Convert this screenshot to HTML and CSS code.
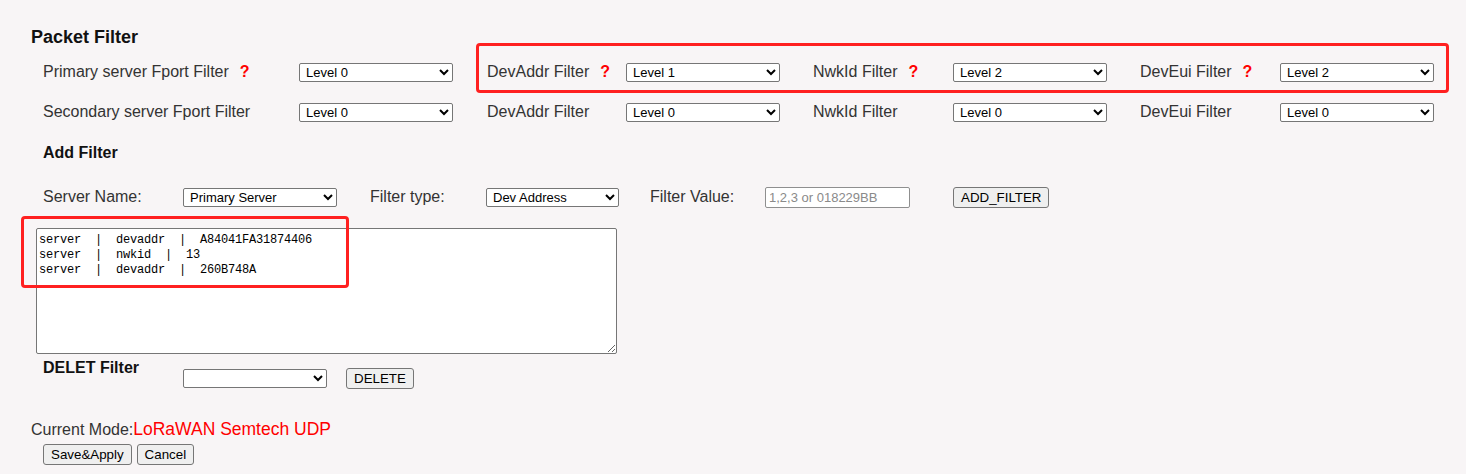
FILE: index.html
```html
<!DOCTYPE html>
<html lang="en">
<head>
    <meta charset="UTF-8">
    <meta name="viewport" content="width=device-width, initial-scale=1.0">
    <title>Packet Filter</title>
    <link rel="stylesheet" href="styles.css">
</head>
<body>
    <div class="page">
        <h2 class="title">Packet Filter</h2>

        <div class="filter-grid">
            <span class="lbl">Primary server Fport Filter<b class="help">?</b></span>
            <select class="lvl"><option>Level 0</option></select>
            <span class="lbl">DevAddr Filter<b class="help">?</b></span>
            <select class="lvl"><option>Level 1</option></select>
            <span class="lbl">NwkId Filter<b class="help">?</b></span>
            <select class="lvl"><option>Level 2</option></select>
            <span class="lbl">DevEui Filter<b class="help">?</b></span>
            <select class="lvl"><option>Level 2</option></select>

            <span class="lbl">Secondary server Fport Filter</span>
            <select class="lvl"><option>Level 0</option></select>
            <span class="lbl">DevAddr Filter</span>
            <select class="lvl"><option>Level 0</option></select>
            <span class="lbl">NwkId Filter</span>
            <select class="lvl"><option>Level 0</option></select>
            <span class="lbl">DevEui Filter</span>
            <select class="lvl"><option>Level 0</option></select>
        </div>

        <h3 class="sub">Add Filter</h3>
        <div class="add-row">
            <span class="lbl w-server">Server Name:</span>
            <select class="sel-server"><option>Primary Server</option></select>
            <span class="lbl w-type">Filter type:</span>
            <select class="sel-type"><option>Dev Address</option></select>
            <span class="lbl w-value">Filter Value:</span>
            <input type="text" class="val" placeholder="1,2,3 or 018229BB">
            <button type="button" class="btn btn-add">ADD_FILTER</button>
        </div>

        <textarea class="list">server  |  devaddr  |  A84041FA31874406
server  |  nwkid  |  13
server  |  devaddr  |  260B748A</textarea>

        <div class="del-row">
            <h3 class="sub del-title">DELET Filter</h3>
            <select class="sel-del"><option></option></select>
            <button type="button" class="btn">DELETE</button>
        </div>

        <p class="mode">Current Mode:<span class="mode-name">LoRaWAN Semtech UDP</span></p>
        <div class="actions">
            <button type="button" class="btn">Save&amp;Apply</button>
            <button type="button" class="btn">Cancel</button>
        </div>

        <div class="mark mark-top"></div>
        <div class="mark mark-list"></div>
    </div>
</body>
</html>
```

FILE: styles.css
```css
body {
    margin: 0;
    padding: 0;
    background: #f8f5f6;
    font-family: "Liberation Sans", Arial, sans-serif;
    color: #333;
}
.page {
    position: relative;
    padding: 26px 0 0 31px;
    height: 448px;
}
.title {
    margin: 0;
    font-size: 18px;
    line-height: 22px;
    color: #111;
}
.filter-grid {
    display: grid;
    grid-template-columns: 256px 188px 139px 187px 140px 187px 140px 154px;
    grid-auto-rows: 40px;
    align-items: center;
    margin: 4px 0 0 12px;
}
.lbl {
    font-size: 16px;
    white-space: nowrap;
}
.help {
    color: #f00;
    margin-left: 11px;
    font-size: 16px;
}
select, input, button, textarea {
    box-sizing: border-box;
}
select {
    font-family: "Liberation Sans", Arial, sans-serif;
    font-size: 13px;
    color: #000;
    background: #fff;
    border: 1px solid #767676;
    border-radius: 2px;
    height: 19px;
    padding: 0 0 0 2px;
}
.lvl {
    width: 154px;
}
.sub {
    margin: 0;
    font-size: 16px;
    line-height: 20px;
    color: #111;
}
.filter-grid + .sub {
    margin: 11px 0 0 12px;
}
.add-row {
    display: flex;
    align-items: center;
    height: 20px;
    margin: 24px 0 0 12px;
}
.w-server { width: 140px; }
.w-type { width: 116px; }
.w-value { width: 115px; }
.sel-server {
    width: 154px;
    margin-right: 33px;
}
.sel-type {
    width: 133px;
    margin-right: 31px;
}
.val {
    width: 145px;
    height: 21px;
    margin-right: 43px;
    border: 1px solid #8f8f8f;
    border-radius: 2px;
    background: #fff;
    padding: 0 3px;
    font-family: "Liberation Sans", Arial, sans-serif;
    font-size: 13px;
}
.val::placeholder {
    color: #8a8a8a;
}
.btn {
    font-family: "Liberation Sans", Arial, sans-serif;
    font-size: 13.33px;
    color: #000;
    background: #efefef;
    border: 1px solid #767676;
    border-radius: 3px;
    padding: 1px 7px;
    height: 21px;
    line-height: 17px;
}
.list {
    display: block;
    width: 581px;
    height: 126px;
    margin: 21px 0 0 5px;
    padding: 4px 2px;
    border: 1px solid #767676;
    border-radius: 2px;
    background: #fff;
    color: #000;
    font-family: "Liberation Mono", "Courier New", monospace;
    font-size: 12px;
    letter-spacing: -0.2px;
    line-height: 15px;
}
.del-row {
    display: flex;
    align-items: flex-start;
    margin: 4px 0 0 12px;
}
.del-title {
    width: 140px;
}
.sel-del {
    width: 144px;
    margin: 11px 19px 0 0;
}
.del-row .btn {
    margin-top: 10px;
}
.mode {
    margin: 30px 0 0;
    font-size: 16px;
    line-height: 20px;
}
.mode-name {
    color: #f00;
    font-size: 17.5px;
}
.actions {
    display: flex;
    gap: 5px;
    margin: 4px 0 0 12px;
}
.mark {
    position: absolute;
    border: 3px solid #ff2020;
    border-radius: 4px;
    box-sizing: border-box;
}
.mark-top {
    left: 476px;
    top: 43px;
    width: 973px;
    height: 50px;
}
.mark-list {
    left: 21px;
    top: 216px;
    width: 328px;
    height: 72px;
}
```
